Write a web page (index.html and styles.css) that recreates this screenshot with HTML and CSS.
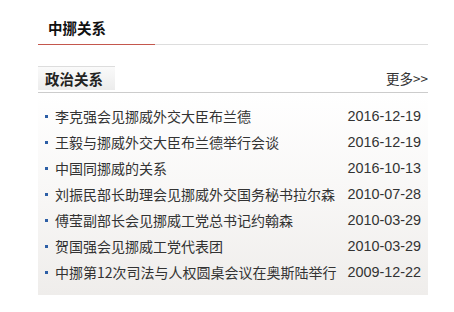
FILE: index.html
```html
<!DOCTYPE html>
<html lang="zh-CN">
<head>
  <meta charset="UTF-8">
  <title>中挪关系</title>
  <link rel="stylesheet" href="styles.css">
</head>
<body>
  <div class="panel">
    <div class="panel-title">
      <h1>中挪关系</h1>
    </div>

    <div class="section-head">
      <span class="tab">政治关系</span>
      <a class="more" href="#">更多&gt;&gt;</a>
    </div>

    <ul class="news">
      <li><span class="news-title">李克强会见挪威外交大臣布兰德</span><span class="news-date">2016-12-19</span></li>
      <li><span class="news-title">王毅与挪威外交大臣布兰德举行会谈</span><span class="news-date">2016-12-19</span></li>
      <li><span class="news-title">中国同挪威的关系</span><span class="news-date">2016-10-13</span></li>
      <li><span class="news-title">刘振民部长助理会见挪威外交国务秘书拉尔森</span><span class="news-date">2010-07-28</span></li>
      <li><span class="news-title">傅莹副部长会见挪威工党总书记约翰森</span><span class="news-date">2010-03-29</span></li>
      <li><span class="news-title">贺国强会见挪威工党代表团</span><span class="news-date">2010-03-29</span></li>
      <li><span class="news-title">中挪第12次司法与人权圆桌会议在奥斯陆举行</span><span class="news-date">2009-12-22</span></li>
    </ul>
  </div>
</body>
</html>
```

FILE: styles.css
```css
body {
  margin: 0;
  font-family: "Noto Sans CJK SC", "Liberation Sans", sans-serif;
  color: #333;
  background: #fff;
}
.panel {
  width: 390px;
  margin-left: 38px;
}
.panel-title {
  height: 44px;
  border-bottom: 1px solid #ddd;
  position: relative;
}
.panel-title::after {
  content: "";
  position: absolute;
  left: 0;
  bottom: -1px;
  width: 117px;
  height: 1px;
  background: #c4574d;
}
.panel-title h1 {
  margin: 0;
  padding: 19px 0 0 10px;
  font-size: 14.5px;
  line-height: 18px;
  font-weight: bold;
  color: #111;
}
.section-head {
  margin-top: 21px;
  display: flex;
  justify-content: space-between;
  align-items: flex-end;
  border-bottom: 1px solid #ccc;
}
.tab {
  width: 70px;
  height: 23px;
  padding-left: 7px;
  margin-bottom: 2px;
  border-top: 1px solid #ddd;
  background: linear-gradient(to bottom, #fafafa, #ececec);
  font-size: 14.5px;
  font-weight: bold;
  line-height: 23px;
  color: #222;
}
.more {
  margin-bottom: 6px;
  font-size: 13.5px;
  line-height: 16px;
  color: #333;
  text-decoration: none;
}
.news {
  list-style: none;
  margin: 0;
  padding: 10px 7px 10px 7px;
  background: linear-gradient(to bottom, #ffffff 0%, #f8f7f6 50%, #efedeb 100%);
}
.news li {
  display: flex;
  justify-content: space-between;
  align-items: center;
  height: 26px;
  font-size: 14px;
}
.news-title {
  position: relative;
  padding-left: 10px;
  white-space: nowrap;
}
.news-title::before {
  content: "";
  position: absolute;
  left: 0;
  top: 50%;
  width: 3px;
  height: 3px;
  margin-top: -1px;
  background: #2d5fa6;
}
.news-date {
  font-family: "Liberation Sans", sans-serif;
  font-size: 14.4px;
  color: #333;
}
```
